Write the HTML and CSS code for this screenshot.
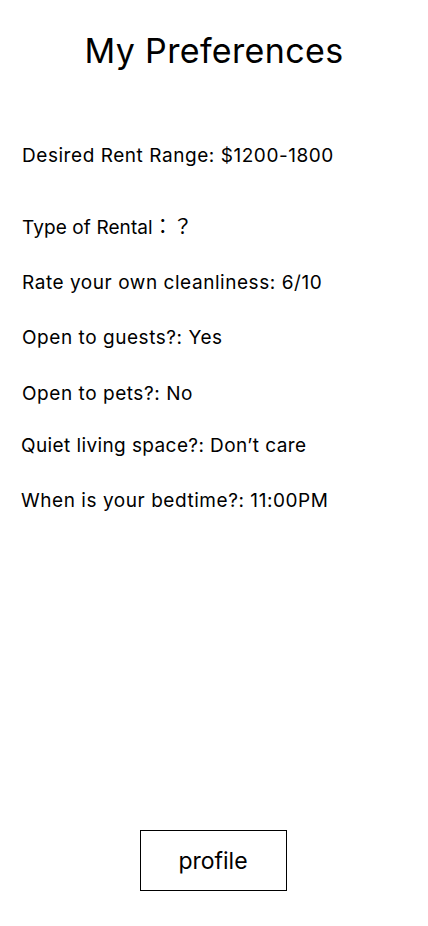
FILE: index.html
```html
<!DOCTYPE html>
<html lang="en">
<head>
<meta charset="utf-8">
<title>My Preferences</title>
<link rel="stylesheet" href="styles.css">
</head>
<body>
<main class="page">
  <h1 class="title">My Preferences</h1>
  <ul class="prefs">
    <li class="pref">Desired Rent Range: $1200-1800</li>
    <li class="pref pref-type">Type of Rental<span class="cjk">：？</span></li>
    <li class="pref">Rate your own cleanliness: 6/10</li>
    <li class="pref">Open to guests?: Yes</li>
    <li class="pref pref-pets">Open to pets?: No</li>
    <li class="pref pref-quiet">Quiet living space?: Don’t care</li>
    <li class="pref pref-shift">When is your bedtime?: 11:00PM</li>
  </ul>
  <button class="profile-btn" type="button">profile</button>
</main>
</body>
</html>
```
FILE: styles.css
```css
* { box-sizing: border-box; }
html, body { margin: 0; padding: 0; background: #fff; }
body {
  font-family: Inter, "Noto Sans", "Noto Sans CJK JP", sans-serif;
  color: #000;
}
.page {
  width: 428px;
  min-height: 926px;
  display: flex;
  flex-direction: column;
  padding: 30px 0 35px;
}
.title {
  margin: 0;
  font-size: 34px;
  font-weight: 400;
  line-height: 41px;
  letter-spacing: 0.35px;
  text-align: center;
}
.prefs {
  list-style: none;
  margin: 74px 0 0;
  padding: 0 0 0 22px;
  display: flex;
  flex-direction: column;
  gap: 33px;
}
.pref {
  font-size: 19px;
  line-height: 22px;
  letter-spacing: 0.55px;
  white-space: nowrap;
}
.pref-type { margin-top: 15px; letter-spacing: 0.1px; }
.pref-pets { margin-top: 1px; }
.pref-quiet { margin-top: -3px; margin-left: -1px; letter-spacing: 0.4px; }
.pref-shift { margin-left: -1px; }
.cjk {
  font-family: "Noto Sans CJK JP", sans-serif;
  font-size: 20px;
  letter-spacing: 0;
}
.profile-btn {
  margin: auto auto 0;
  width: 147px;
  height: 61px;
  border: 1px solid #000;
  background: #fff;
  font-family: Inter, sans-serif;
  font-size: 23px;
  color: #000;
  padding: 0;
  transform: translateX(-1px);
}
```
